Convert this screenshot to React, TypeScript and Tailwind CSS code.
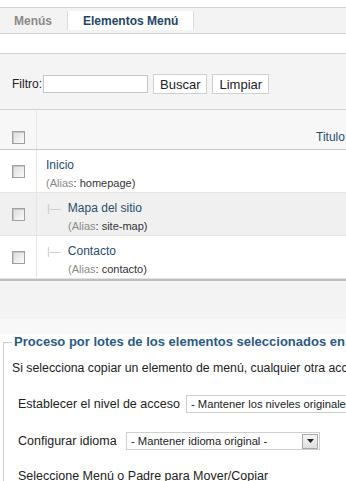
const Check = () => (
  <span className="block w-[13px] h-[13px] border border-[#a0a0a0] bg-gradient-to-br from-[#dcdcdc] to-[#fbfbfb] shadow-[inset_1px_1px_0_#c8c8c8]" />
);

const rows = [
  { title: 'Inicio', alias: 'homepage', level: 0, bg: 'bg-white' },
  { title: 'Mapa del sitio', alias: 'site-map', level: 1, bg: 'bg-[#f0f0f0]' },
  { title: 'Contacto', alias: 'contacto', level: 1, bg: 'bg-white' },
];

const App = () => {
  return (
    <div className="w-[346px] h-[481px] overflow-hidden bg-white text-[12px] text-[#333] font-['Liberation_Sans',Arial,sans-serif]">
      <div className="w-[800px]">
        <div className="h-[7px]" />

        {/* tabs */}
        <div className="h-[27px] border-y border-[#d2d2d2] bg-[#f3f3f3] flex items-center">
          <span className="pl-[14px] pr-[15px] font-bold text-[#8a8a8a]">Menús</span>
          <span className="h-[19px] flex items-center px-[15px] bg-white border-x border-[#dcdcdc] font-bold text-[#1f4566]">Elementos Menú</span>
        </div>

        <div className="h-[20px] border-b border-[#d2d2d2]" />

        {/* filter */}
        <div className="h-[56px] bg-[#f4f4f4] border-b border-[#d2d2d2] flex items-center pl-[12px] pt-[5px]">
          <label className="text-[#222]">Filtro:</label>
          <input className="ml-[1px] w-[105px] h-[18px] bg-white border border-[#c6c6c6]" />
          <button className="ml-[5px] h-[20px] px-[6px] bg-white border border-[#cfcfcf] text-[13px] text-[#222] leading-none">Buscar</button>
          <button className="ml-[5px] h-[20px] px-[6px] bg-white border border-[#cfcfcf] text-[13px] text-[#222] leading-none">Limpiar</button>
        </div>

        {/* table header */}
        <div className="h-[40px] bg-[#f7f7f7] border-b border-[#cbcbcb] flex">
          <div className="w-[37px] border-r border-[#e6e6e6] flex items-center justify-center pt-[15px]">
            <Check />
          </div>
          <div className="flex-1 flex items-center pl-[279px] pt-[15px] text-[#284d6c]">Titulo</div>
        </div>

        {/* rows */}
        {rows.map((r) => (
          <div key={r.title} className={`h-[43px] flex border-b border-[#e4e4e4] ${r.bg}`}>
            <div className="w-[37px] border-r border-[#e6e6e6] flex items-center justify-center">
              <Check />
            </div>
            <div className={`flex-1 flex flex-col pt-[6px] leading-[18px] ${r.level > 0 ? 'pl-[10px]' : 'pl-[9px]'}`}>
              <span className="text-[#284d6c]">
                {r.level > 0 && <span className="mr-[7px] text-[#c8c8c8] text-[11px]">|—</span>}
                {r.title}
              </span>
              <span className={`text-[11px] ${r.level > 0 ? 'pl-[21px]' : ''}`}>
                <span className="text-[#8a8a8a]">(Alias</span>: {r.alias})
              </span>
            </div>
          </div>
        ))}

        <div className="h-[2px] bg-[#bdbdbd]" />

        {/* footer */}
        <div className="h-[38px] bg-[#f3f3f3]" />
        <div className="h-[15px] bg-[#f8f8f8]" />

        {/* batch */}
        <fieldset className="ml-[3px] border-l border-t border-[#cccccc] pl-[8px]">
          <legend className="px-[2px] text-[13px] leading-[16px] font-bold text-[#2c5a83]">
            Proceso por lotes de los elementos seleccionados en el menú
          </legend>
          <p className="mt-[9px] leading-[18px] text-[12.3px] text-[#222]">Si selecciona copiar un elemento de menú, cualquier otra acción será aplicada al elemento copiado.</p>

          <div className="mt-[18px] ml-[6px] flex items-center">
            <span className="w-[168px] text-[#222] text-[12.5px]">Establecer el nivel de acceso</span>
            <span className="w-[300px] h-[18px] border border-[#cfcfcf] bg-white text-[11.2px] pl-[4px] flex items-center text-[#222]">
              - Mantener los niveles originales de acceso -
            </span>
          </div>

          <div className="mt-[18px] ml-[6px] flex items-center">
            <span className="w-[108px] text-[#222] text-[12.5px]">Configurar idioma</span>
            <span className="w-[194px] h-[18px] border border-[#cfcfcf] bg-white text-[11.2px] pl-[4px] flex items-center justify-between text-[#222]">
              - Mantener idioma original -
              <span className="w-[16px] h-[15px] border border-[#a8a8a8] bg-gradient-to-b from-[#f6f6f6] to-[#dedede] flex items-center justify-center mr-[1px]">
                <svg width="7" height="4" viewBox="0 0 7 4"><polygon points="0,0 7,0 3.5,4" fill="#222" /></svg>
              </span>
            </span>
          </div>

          <p className="mt-[16px] ml-[6px] leading-[18px] text-[#222] text-[12.5px]">Seleccione Menú o Padre para Mover/Copiar</p>
        </fieldset>
      </div>
    </div>
  );
};

export default App;
